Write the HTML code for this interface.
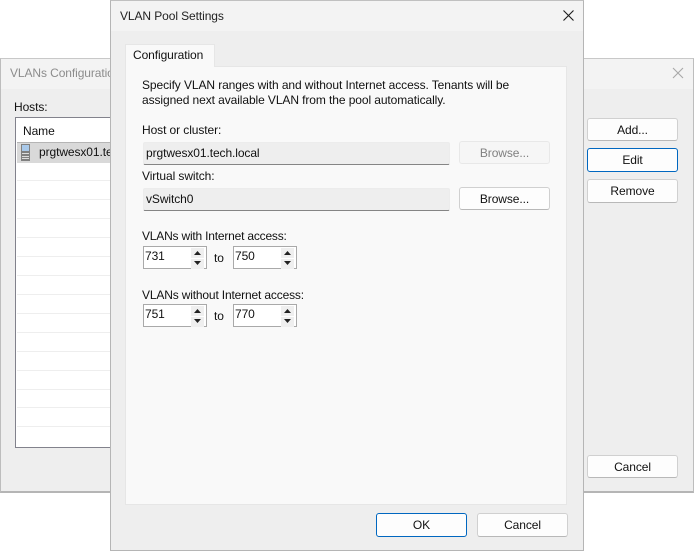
<!DOCTYPE html>
<html><head><meta charset="utf-8">
<style>
html,body{margin:0;padding:0;background:#fff}
body{width:694px;height:551px;position:relative;overflow:hidden;font:12px "Liberation Sans",sans-serif;color:#111;letter-spacing:-.09px}
div{position:absolute;box-sizing:border-box}
.t{white-space:nowrap;line-height:15px}
.btn{background:#fdfdfd;border:1px solid #d0d0d0;border-bottom-color:#b8b8b8;border-radius:3px;text-align:center;line-height:22px;width:91px;height:23px;color:#111}
.def{border:1px solid #0067c0;line-height:22px;height:24px}
.dis{background:#f6f6f6;border-color:#e8e8e8;color:#808080}
.field{left:143px;width:307px;height:23px;background:#eee;border:1px solid #ececec;border-bottom:1px solid #858585;border-radius:2px;padding:0 2px;line-height:21px}
.spin{width:64px;height:23px;background:#fff;border:1px solid #a9a9a9;padding-left:1px;line-height:18px;font-size:12px}
.spin i{position:absolute;right:2px;width:13px;height:10px;background:#efefef}
.spin i.u{top:1px}.spin i.d{top:11px;border-top:1px solid #fff}
.spin svg{position:absolute;left:3px;top:3px;display:block}
.spin i.d svg{top:2px}
.row{left:1px;width:93px;height:1px;background:#eee}
</style></head><body>

<!-- back window -->
<div style="left:0;top:58px;width:694px;height:435px;background:#eee;border:1px solid #bdbdbd;border-bottom:2px solid #b5b5b5;border-top-color:#c8c8c8"></div>
<div style="left:1px;top:59px;width:692px;height:30px;background:#f3f3f3"></div>
<div class="t" style="left:10px;top:66px;color:#8c8c8c">VLANs Configuration</div>
<svg style="position:absolute;left:672px;top:67px" width="12" height="12"><path d="M1 1L11 11M11 1L1 11" stroke="#a8a8a8" stroke-width="1.1" fill="none"/></svg>
<div class="t" style="left:14px;top:100px">Hosts:</div>
<div style="left:15px;top:117px;width:100px;height:331px;background:#fff;border:1px solid #82828c;border-right:0">
  <div class="t" style="left:7px;top:6px">Name</div>
  <div style="left:1px;top:24px;width:96px;height:21px;background:#d9d9d9;border-top:1px solid #b5b5b5"></div>
  <div style="left:5px;top:26px;width:9px;height:17px;background:#808080"></div>
  <div style="left:6px;top:27px;width:7px;height:6px;background:#a9c9ea"></div>
  <div style="left:6px;top:35px;width:7px;height:1px;background:#ddd"></div>
  <div style="left:6px;top:38px;width:7px;height:1px;background:#ddd"></div>
  <div style="left:6px;top:40px;width:7px;height:1px;background:#ddd"></div>
  <div class="t" style="left:23px;top:27px;width:72px;overflow:hidden">prgtwesx01.tech.local</div>
  <div class="row" style="top:62px"></div><div class="row" style="top:81px"></div>
  <div class="row" style="top:100px"></div><div class="row" style="top:119px"></div>
  <div class="row" style="top:138px"></div><div class="row" style="top:157px"></div>
  <div class="row" style="top:176px"></div><div class="row" style="top:195px"></div>
  <div class="row" style="top:214px"></div><div class="row" style="top:233px"></div>
  <div class="row" style="top:252px"></div><div class="row" style="top:271px"></div>
  <div class="row" style="top:289px"></div><div class="row" style="top:308px"></div>
</div>
<div class="btn" style="left:587px;top:118px">Add...</div>
<div class="btn def" style="left:587px;top:148px">Edit</div>
<div class="btn" style="left:587px;top:179px;height:24px;line-height:22px">Remove</div>
<div class="btn" style="left:587px;top:455px">Cancel</div>

<!-- front window -->
<div style="left:110px;top:0;width:474px;height:551px;background:#eee;border:1px solid #b5b5b5;border-top-color:#c0c0c0"></div>
<div style="left:111px;top:1px;width:472px;height:30px;background:#f3f3f3"></div>
<div class="t" style="left:120px;top:9px;color:#222">VLAN Pool Settings</div>
<svg style="position:absolute;left:563px;top:10px" width="11" height="11"><path d="M0.5 0.5L10.5 10.5M10.5 0.5L0.5 10.5" stroke="#1a1a1a" stroke-width="1.1" fill="none"/></svg>

<div style="left:125px;top:66px;width:442px;height:439px;background:#f9f9f9;border:1px solid #e6e6e6"></div>
<div style="left:125px;top:44px;width:90px;height:23px;background:#f9f9f9;border:1px solid #e6e6e6;border-bottom:0"></div>
<div class="t" style="left:133px;top:48px">Configuration</div>

<div class="t" style="left:142px;top:78px">Specify VLAN ranges with and without Internet access. Tenants will be</div>
<div class="t" style="left:142px;top:93px">assigned next available VLAN from the pool automatically.</div>

<div class="t" style="left:142px;top:123px">Host or cluster:</div>
<div class="field" style="top:142px">prgtwesx01.tech.local</div>
<div class="btn dis" style="left:459px;top:141px">Browse...</div>

<div class="t" style="left:142px;top:169px">Virtual switch:</div>
<div class="field" style="top:188px">vSwitch0</div>
<div class="btn" style="left:459px;top:187px">Browse...</div>

<div class="t" style="left:142px;top:229px;letter-spacing:-.2px">VLANs with Internet access:</div>
<div class="spin" style="left:143px;top:246px">731<i class="u"><svg width="7" height="5"><path d="M3.5 0L7 4H0Z" fill="#222"/></svg></i><i class="d"><svg width="7" height="5"><path d="M0 0H7L3.5 4Z" fill="#222"/></svg></i></div>
<div class="t" style="left:214px;top:251px">to</div>
<div class="spin" style="left:233px;top:246px">750<i class="u"><svg width="7" height="5"><path d="M3.5 0L7 4H0Z" fill="#222"/></svg></i><i class="d"><svg width="7" height="5"><path d="M0 0H7L3.5 4Z" fill="#222"/></svg></i></div>

<div class="t" style="left:142px;top:288px;letter-spacing:-.16px">VLANs without Internet access:</div>
<div class="spin" style="left:143px;top:304px">751<i class="u"><svg width="7" height="5"><path d="M3.5 0L7 4H0Z" fill="#222"/></svg></i><i class="d"><svg width="7" height="5"><path d="M0 0H7L3.5 4Z" fill="#222"/></svg></i></div>
<div class="t" style="left:214px;top:309px">to</div>
<div class="spin" style="left:233px;top:304px">770<i class="u"><svg width="7" height="5"><path d="M3.5 0L7 4H0Z" fill="#222"/></svg></i><i class="d"><svg width="7" height="5"><path d="M0 0H7L3.5 4Z" fill="#222"/></svg></i></div>

<div class="btn def" style="left:376px;top:513px">OK</div>
<div class="btn" style="left:477px;top:513px;height:24px;line-height:22px">Cancel</div>
</body></html>
